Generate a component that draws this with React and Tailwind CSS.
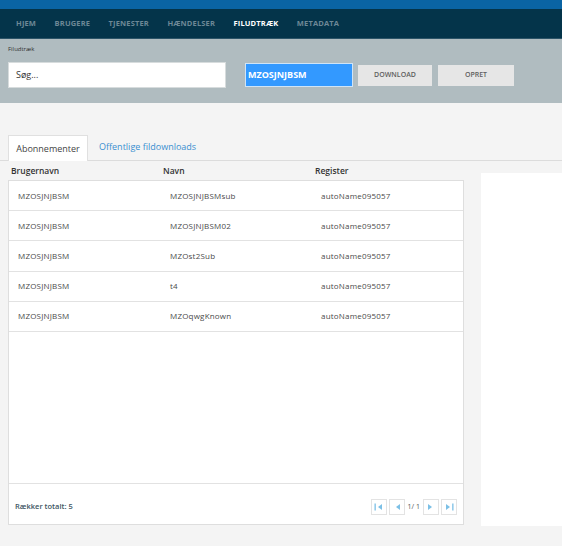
const nav = ["HJEM", "BRUGERE", "TJENESTER", "HÆNDELSER", "FILUDTRÆK", "METADATA"];

const rows = [
  ["MZOSJNJBSM", "MZOSJNJBSMsub", "autoName095057"],
  ["MZOSJNJBSM", "MZOSJNJBSM02", "autoName095057"],
  ["MZOSJNJBSM", "MZOst2Sub", "autoName095057"],
  ["MZOSJNJBSM", "t4", "autoName095057"],
  ["MZOSJNJBSM", "MZOqwgKnown", "autoName095057"],
];

const PageBtn = ({ children }) => (
  <div className="w-[16px] h-[16px] border border-[#e3e3e3] bg-white flex items-center justify-center text-[#7cc0e6]">
    {children}
  </div>
);

const Arrow = ({ dir = "left", bar = false }) => (
  <svg width="9" height="8" viewBox="0 0 9 8" fill="currentColor">
    {dir === "left" ? (
      <>
        {bar && <rect x="0.5" y="0.5" width="1.3" height="7" />}
        <polygon points="8,1 8,7 4,4" />
      </>
    ) : (
      <>
        <polygon points="1,1 1,7 5,4" />
        {bar && <rect x="7.2" y="0.5" width="1.3" height="7" />}
      </>
    )}
  </svg>
);

export default function App() {
  return (
    <div className="w-[562px] h-[546px] bg-[#f4f4f4] overflow-hidden font-['Open_Sans','Noto_Sans',sans-serif]">
      <div className="h-[9px] bg-[#0a64a4]" />
      <div className="h-[30px] bg-[#04344a] flex items-center pl-[16px] gap-[18.5px] border-b border-[#2c5468]">
        {nav.map((n) => (
          <span
            key={n}
            className={`text-[7.5px] font-bold tracking-[0.15px] ${n === "FILUDTRÆK" ? "text-white" : "text-[#6d8896]"}`}
          >
            {n}
          </span>
        ))}
      </div>
      <div className="h-[64px] bg-[#b0bcc0] px-[8px] pt-[7px]">
        <div className="text-[6px] text-[#333] leading-none">Filudtræk</div>
        <div className="flex items-center mt-[10px]">
          <div className="w-[218px] h-[26px] bg-white border border-[#d7dcdd] flex items-center pl-[7px] text-[9px] text-[#333]">
            Søg...
          </div>
          <div className="ml-[19px] w-[108px] h-[24px] bg-[#3399ff] border border-[#cfe4f7] flex items-center pl-[2px] text-[9px] font-bold text-white">
            MZOSJNJBSM
          </div>
          <div className="ml-[5px] w-[74px] h-[21px] bg-[#e6e6e6] flex items-center justify-center text-[7px] font-semibold text-[#5f5f5f]">
            DOWNLOAD
          </div>
          <div className="ml-[6px] w-[76px] h-[21px] bg-[#e6e6e6] flex items-center justify-center text-[7px] font-semibold text-[#5f5f5f]">
            OPRET
          </div>
        </div>
      </div>

      <div className="pt-[32px]">
        <div className="flex items-end pl-[8px] border-b border-[#dcdcdc] h-[26px]">
          <div className="w-[80px] h-[26px] bg-white border border-b-0 border-[#e0e0e0] flex items-center justify-center text-[9px] text-[#444] -mb-px">
            Abonnementer
          </div>
          <div className="ml-[11px] h-[26px] flex items-center text-[9px] text-[#3a8fd0]">
            Offentlige fildownloads
          </div>
        </div>

        <div className="flex">
          <div className="pl-[8px] w-[464px]">
            <div className="flex h-[19px] items-center pt-[1px] text-[8.5px] font-semibold text-[#333]">
              <div className="w-[155px] pl-[3px]">Brugernavn</div>
              <div className="w-[152px]">Navn</div>
              <div>Register</div>
            </div>
            <div className="w-[456px] h-[345px] bg-white border border-[#dedede] flex flex-col">
              <div className="h-[302px]">
                {rows.map((r, i) => (
                  <div
                    key={i}
                    className="h-[30.2px] flex items-center border-b border-[#e2e2e2] text-[8px] tracking-[0.2px] text-[#4a4a4a]"
                  >
                    <div className="w-[152px] pl-[9px]">{r[0]}</div>
                    <div className="w-[152px] pl-[9px]">{r[1]}</div>
                    <div className="pl-[8px]">{r[2]}</div>
                  </div>
                ))}
              </div>
              <div className="flex-1 border-t border-[#e2e2e2] flex items-center justify-between pl-[6px] pr-[6px] pt-[6px]">
                <span className="text-[7.5px] font-semibold text-[#3d5563]">Rækker totalt: 5</span>
                <div className="flex items-center gap-[2px]">
                  <PageBtn>
                    <Arrow dir="left" bar />
                  </PageBtn>
                  <PageBtn>
                    <Arrow dir="left" />
                  </PageBtn>
                  <span className="text-[7px] text-[#555] px-[1px]">1/ 1</span>
                  <PageBtn>
                    <Arrow dir="right" />
                  </PageBtn>
                  <PageBtn>
                    <Arrow dir="right" bar />
                  </PageBtn>
                </div>
              </div>
            </div>
          </div>
          <div className="ml-[17px] mt-[12px] flex-1 h-[353px] bg-white" />
        </div>
      </div>
    </div>
  );
}
